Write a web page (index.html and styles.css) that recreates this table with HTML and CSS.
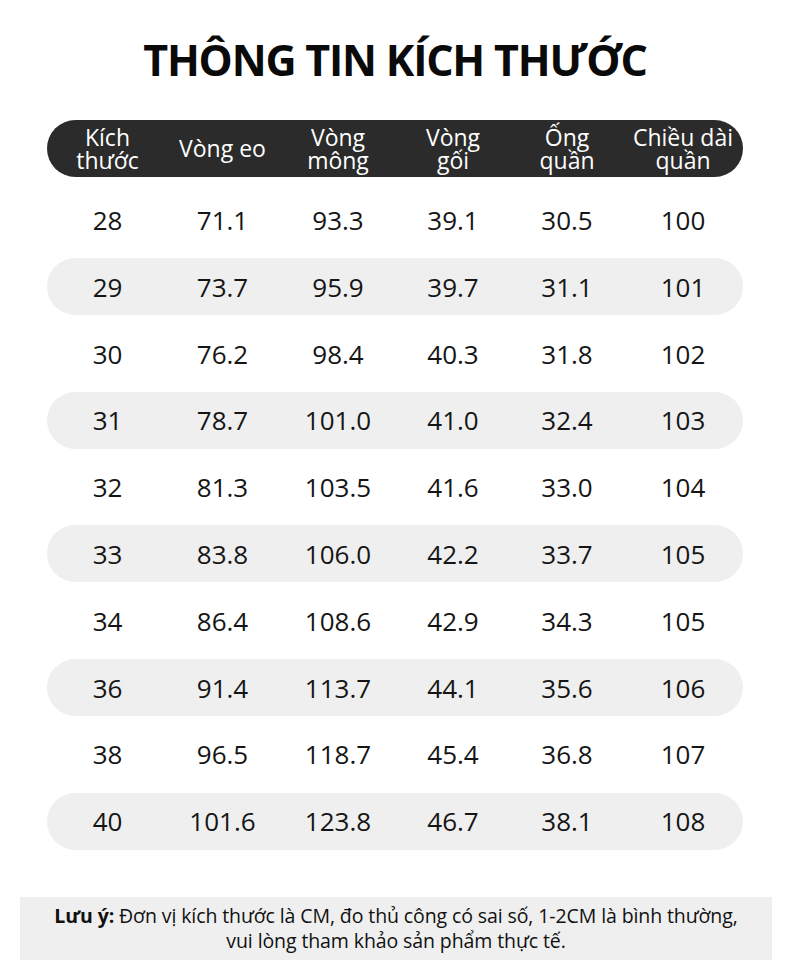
FILE: index.html
```html
<!DOCTYPE html>
<html lang="vi">
<head>
<meta charset="utf-8">
<title>Thông tin kích thước</title>
<link rel="stylesheet" href="styles.css">
</head>
<body>
<main class="page">
  <h1 class="title">THÔNG TIN KÍCH THƯỚC</h1>
  <section class="table">
    <div class="row head">
      <div><span>Kích</span><span>thước</span></div>
      <div><span>Vòng eo</span></div>
      <div><span>Vòng</span><span>mông</span></div>
      <div><span>Vòng</span><span>gối</span></div>
      <div><span>Ống</span><span>quần</span></div>
      <div><span>Chiều dài</span><span>quần</span></div>
    </div>
    <div class="row"><div>28</div><div>71.1</div><div>93.3</div><div>39.1</div><div>30.5</div><div>100</div></div>
    <div class="row alt"><div>29</div><div>73.7</div><div>95.9</div><div>39.7</div><div>31.1</div><div>101</div></div>
    <div class="row"><div>30</div><div>76.2</div><div>98.4</div><div>40.3</div><div>31.8</div><div>102</div></div>
    <div class="row alt"><div>31</div><div>78.7</div><div>101.0</div><div>41.0</div><div>32.4</div><div>103</div></div>
    <div class="row"><div>32</div><div>81.3</div><div>103.5</div><div>41.6</div><div>33.0</div><div>104</div></div>
    <div class="row alt"><div>33</div><div>83.8</div><div>106.0</div><div>42.2</div><div>33.7</div><div>105</div></div>
    <div class="row"><div>34</div><div>86.4</div><div>108.6</div><div>42.9</div><div>34.3</div><div>105</div></div>
    <div class="row alt"><div>36</div><div>91.4</div><div>113.7</div><div>44.1</div><div>35.6</div><div>106</div></div>
    <div class="row"><div>38</div><div>96.5</div><div>118.7</div><div>45.4</div><div>36.8</div><div>107</div></div>
    <div class="row alt"><div>40</div><div>101.6</div><div>123.8</div><div>46.7</div><div>38.1</div><div>108</div></div>
  </section>
  <p class="note"><b>Lưu ý:</b> Đơn vị kích thước là CM, đo thủ công có sai số, 1-2CM là bình thường,<br>vui lòng tham khảo sản phẩm thực tế.</p>
</main>
</body>
</html>
```

FILE: styles.css
```css
html, body {
  margin: 0;
  padding: 0;
  background: #ffffff;
}
.page {
  width: 790px;
  height: 980px;
  font-family: "Open Sans", "Noto Sans", sans-serif;
  color: #111;
  padding-top: 30px;
  box-sizing: border-box;
}
.title {
  margin: 0;
  text-align: center;
  font-size: 43px;
  line-height: 60px;
  font-weight: 700;
  letter-spacing: -1.2px;
  color: #0a0a0a;
}
.table {
  margin: 30px 47px 0;
  display: flex;
  flex-direction: column;
  gap: 9.8px;
}
.row {
  display: grid;
  grid-template-columns: 115px 115px 116px 114px 114px 118px;
  padding: 0 3px;
  height: 57px;
  align-items: center;
  border-radius: 29px;
  font-size: 26px;
  color: #151515;
}
.row > div {
  text-align: center;
}
.row.head {
  background: #2b2b2b;
  color: #ffffff;
  font-size: 23px;
  margin-bottom: 4.7px;
}
.row.head > div {
  display: flex;
  flex-direction: column;
  align-items: center;
}
.row.head span {
  display: block;
  height: 23px;
  line-height: 23px;
  white-space: nowrap;
}
.row.alt {
  background: #efefef;
}
.note {
  margin: 47px 18px 0 20px;
  background: #efefef;
  padding: 6px 0 7px;
  text-align: center;
  font-size: 19.5px;
  line-height: 25px;
  color: #111;
  letter-spacing: -0.1px;
}
.note b {
  font-weight: 700;
}
```
